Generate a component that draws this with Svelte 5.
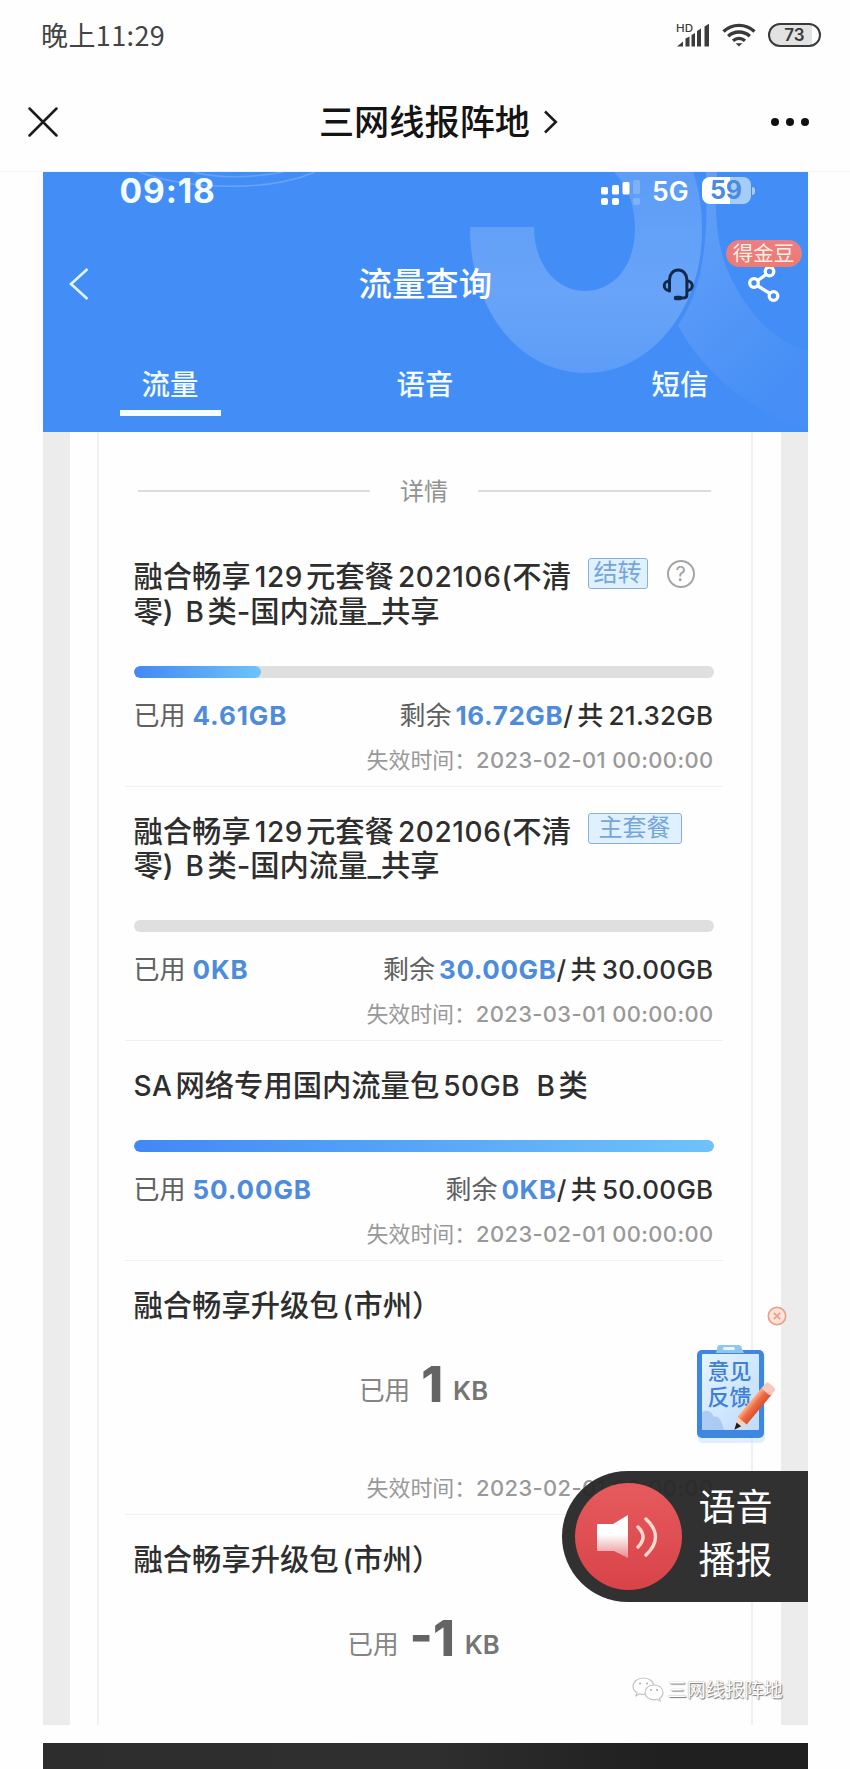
<script>
  const tabs = ["流量", "语音", "短信"];
  let active = "流量";

  const plans = [
    {
      lines: ["融合畅享129元套餐202106(不清", "零) B类-国内流量_共享"],
      tag: "结转",
      help: true,
      used: "4.61GB",
      left: "16.72GB",
      total: "21.32GB",
      percent: 22,
      expires: "2023-02-01 00:00:00"
    },
    {
      lines: ["融合畅享129元套餐202106(不清", "零) B类-国内流量_共享"],
      tag: "主套餐",
      used: "0KB",
      left: "30.00GB",
      total: "30.00GB",
      percent: 0,
      expires: "2023-03-01 00:00:00"
    },
    {
      lines: ["SA网络专用国内流量包50GB  B类"],
      used: "50.00GB",
      left: "0KB",
      total: "50.00GB",
      percent: 100,
      expires: "2023-02-01 00:00:00"
    },
    { lines: ["融合畅享升级包(市州）"], used: "1", unit: "KB", expires: "2023-02-01 00:00:00" },
    { lines: ["融合畅享升级包(市州）"], used: "-1", unit: "KB" }
  ];

  // split a title into latin and chinese runs, so the latin ones can be spaced
  function runs(text) {
    return text.match(/[A-Z0-9(][A-Z0-9( ]*|[^A-Z0-9(]+/g).map((t) => ({
      text: t,
      latin: /[A-Z0-9(]/.test(t),
      open: t.endsWith("(")
    }));
  }
</script>

<div class="phone">
  <div class="status">
    <span class="clock">晚上11:29</span>
    <svg class="signal" width="34" height="26" viewBox="0 0 34 26">
      <text x="0" y="9.5" textLength="17" lengthAdjust="spacingAndGlyphs">HD</text>
      <path d="M1 24.500l6-5v5zM9.500 24.500v-8l4-2v10zM15.500 24.500V13l3.500-2v13.500zM21 24.500V9l4-2.500v18zM28.500 24.500V4.500L33 1.800v22.700z" fill="#3c3c3c" />
    </svg>
    <svg class="wifi" width="34" height="24" viewBox="0 0 34 24" fill="none" stroke="#3a3a3a" stroke-width="3.400">
      <path d="M1.500 8.500C10 .300 24 .300 32.500 8.500" />
      <path d="M6.200 13.200c6-5.600 15.600-5.600 21.600 0" />
      <path d="M11 17.700c3.600-3 8.400-3 12 0" />
      <path d="M13.600 20.300h6.800L17 23.600z" fill="#3a3a3a" stroke="none" />
    </svg>
    <span class="battery">73</span>
  </div>

  <nav class="navbar">
    <svg class="close" width="32" height="32" viewBox="0 0 32 32" stroke="#1c1c1c" stroke-width="2.500" stroke-linecap="round">
      <path d="M2.500 2.500l27 27M29.500 2.500l-27 27" />
    </svg>
    <div class="account">
      <span>三网线报阵地</span>
      <svg width="15" height="24" viewBox="0 0 15 24" fill="none" stroke="#1c1c1c" stroke-width="2.600">
        <path d="M2 1.500L12.800 12 2 22.500" />
      </svg>
    </div>
    <svg class="more" width="40" height="10" viewBox="0 0 40 10" fill="#111">
      <circle cx="4" cy="5" r="4" /><circle cx="19" cy="5" r="4" /><circle cx="34" cy="5" r="4" />
    </svg>
  </nav>

  <main class="shot">
    <header>
      <svg class="backdrop" width="765" height="260" viewBox="0 0 765 260" fill="none">
        <defs>
          <linearGradient id="ring" x1="0" y1="0" x2="0" y2="1">
            <stop offset="0" stop-color="#fff" stop-opacity=".14" />
            <stop offset=".6" stop-color="#fff" stop-opacity=".2" />
            <stop offset="1" stop-color="#fff" stop-opacity=".14" />
          </linearGradient>
          <linearGradient id="ring2" x1="0" y1="0" x2=".5" y2="1">
            <stop offset="0" stop-color="#fff" stop-opacity=".18" />
            <stop offset="1" stop-color="#fff" stop-opacity=".02" />
          </linearGradient>
        </defs>
        <path d="M427 55h64c0 38 23 64 51 64 30 0 50-27 50-62 0-25-8-44-21-57h79c6 16 9 37 9 58 0 82-53 143-116 143-66 0-116-62-116-146z" fill="url(#ring)" />
        <path d="M663 0h11c-3 40-1 78 16 110 19 37 45 61 75 69v75c-56-12-106-54-130-101 23-33 31-75 28-153z" fill="url(#ring2)" />
        <path d="M96 0c50 18 130 20 176 0M150 0c28 7 58 6 90 0" stroke="#fff" stroke-opacity=".2" stroke-width="1.500" />
      </svg>

      <div class="ios-status">
        <b class="ios-clock">09:18</b>
        <svg class="dots" width="40" height="26" viewBox="0 0 40 26" fill="#fff">
          <rect x="1" y="7" width="7" height="7.500" rx="1.500" /><rect x="12" y="5" width="7" height="9.500" rx="1.500" />
          <rect x="22.500" y="2" width="7" height="12.500" rx="1.500" /><rect x="33" y="0" width="7" height="14" rx="1.500" opacity=".2" />
          <rect x="1" y="18" width="7" height="7" rx="2" /><rect x="12" y="18" width="7" height="7" rx="2" />
          <rect x="22.500" y="19" width="7" height="5" rx="2" fill="#3a8ffb" /><rect x="33" y="18" width="7" height="7" rx="2" opacity=".2" />
        </svg>
        <span class="net">5G</span>
        <span class="ios-battery">59</span>
        <i class="nub"></i>
      </div>

      <div class="title-bar">
        <svg class="back" width="20" height="32" viewBox="0 0 20 32" fill="none" stroke="#dff6ff" stroke-width="2.600">
          <path d="M18.500 1L2 16l16.500 15" />
        </svg>
        <h1>流量查询</h1>
        <svg class="headset" width="34" height="34" viewBox="0 0 34 34" fill="none" stroke="#12294a" stroke-width="3">
          <path d="M8.500 24V12.500a8.700 9.500 0 0 1 17.400 0V28q0 3-4 3H15" stroke-linecap="round" />
          <path d="M8.500 14c-7 0-7 9.500 0 9.500M26 14c7 0 7 9.500 0 9.500" />
          <path d="M15 31h4" stroke-width="4.500" stroke-linecap="round" />
        </svg>
        <div class="share">
          <svg width="34" height="38" viewBox="0 0 34 38" fill="none" stroke="#fff" stroke-width="3.300">
            <path d="M19 9.500l-9 6.500M10 20.500l13 8" />
            <circle cx="22.500" cy="6.500" r="4.300" /><circle cx="7" cy="18" r="4.300" /><circle cx="26.500" cy="31" r="4.300" />
          </svg>
          <span class="badge">得金豆</span>
        </div>
      </div>

      <div class="tabs">
        {#each tabs as tab}
          <button class:active={tab === active} on:click={() => (active = tab)}>{tab}</button>
        {/each}
      </div>
    </header>

    <div class="page">
      <section class="card">
        <div class="heading"><span>详情</span></div>

        {#each plans as plan}
          <article class:plain={plan.unit}>
            <div class="name">
              <h2>
                {#each plan.lines as line}
                  <div>{#each runs(line) as run}<span class:latin={run.latin} class:open={run.open}>{run.text}</span>{/each}</div>
                {/each}
              </h2>
              {#if plan.tag}<span class="tag">{plan.tag}</span>{/if}
              {#if plan.help}<span class="help">?</span>{/if}
            </div>

            {#if plan.unit}
              <p class="amount">已用<b>{plan.used}</b><em>{plan.unit}</em></p>
            {:else}
              <div class="track"><div class="fill" style="width: {plan.percent}%"></div></div>
              <div class="usage">
                <span>已用<b>{plan.used}</b></span>
                <span class="rest">剩余<b>{plan.left}</b><em>/<i>共</i>{plan.total}</em></span>
              </div>
            {/if}
            {#if plan.expires}
              <p class="expires">失效时间：<span>{plan.expires}</span></p>
            {/if}
          </article>
        {/each}
      </section>
    </div>

    <svg class="dismiss" width="20" height="20" viewBox="0 0 20 20" fill="#ffe3d9" stroke="#e9a08c" stroke-width="1.700">
      <circle cx="10" cy="10" r="8.700" /><path d="M6.800 6.800l6.400 6.400M13.200 6.800l-6.400 6.400" />
    </svg>

    <div class="feedback">
      <svg width="84" height="100" viewBox="0 0 84 100">
        <defs>
          <linearGradient id="paper" x1="0" y1="0" x2="1" y2="1">
            <stop offset="0" stop-color="#e4f4ff" /><stop offset="1" stop-color="#bfdcfb" />
          </linearGradient>
        </defs>
        <rect x="3" y="10" width="67" height="90" rx="5" fill="#bfe0ff" opacity=".5" />
        <rect x="2" y="7" width="67" height="88" rx="5" fill="#3f86e0" />
        <rect x="7" y="11" width="57" height="76" rx="1" fill="url(#paper)" />
        <path d="M7 69q8-4 12 5 6-3 10 13H7z" fill="#9dbff0" opacity=".7" />
        <path d="M25 2h18q4 0 4 4l2 4H21l1-4q0-4 3-4z" fill="#8fc6ea" />
        <rect x="28" y="4" width="12" height="3" rx="1.500" fill="#e6f6ff" />
      </svg>
      <span>意见<br />反馈</span>
      <svg class="pencil" width="84" height="100" viewBox="0 0 84 100">
        <defs>
          <linearGradient id="pen" x1="0" y1="0" x2="1" y2="0">
            <stop offset="0" stop-color="#ffb491" /><stop offset=".45" stop-color="#ee6d42" /><stop offset="1" stop-color="#d9502f" />
          </linearGradient>
        </defs>
        <g transform="translate(40 86) rotate(40)">
          <path d="M-6-12L0 0l6-12z" fill="#ffd2b4" /><path d="M-3-6L0 1l3-7z" fill="#1c1c24" />
          <rect x="-6" y="-50" width="12" height="39" fill="url(#pen)" />
          <rect x="-6" y="-57" width="12" height="9" rx="3" fill="#f6c9bd" />
        </g>
      </svg>
    </div>

    <div class="voice">
      <div class="speaker">
        <svg width="64" height="46" viewBox="0 0 64 46">
          <defs>
            <linearGradient id="horn" x1="0" y1="0" x2="0" y2="1">
              <stop offset=".45" stop-color="#fff" /><stop offset="1" stop-color="#fff" stop-opacity=".35" />
            </linearGradient>
          </defs>
          <path d="M1 11q0-1 1-1h15L32 1v43L18 37H2q-1 0-1-1z" fill="url(#horn)" />
          <path d="M42 13q10 10 0 20M50 5q19 18 0 36" fill="none" stroke="#ffd9d0" stroke-width="3.400" stroke-linecap="round" />
        </svg>
      </div>
      <span>语音<br />播报</span>
    </div>

    <div class="watermark">
      <svg width="32" height="26" viewBox="0 0 32 26" fill="#fff" stroke="#c4c4c4" stroke-width="1.200">
        <path d="M11.500 1C5.500 1 1 4.700 1 9.300c0 2.700 1.500 5 4 6.500l-1 3 3.600-1.900c1.200.4 2.500.600 3.900.600 6 0 10.500-3.700 10.500-8.200S17.500 1 11.500 1z" />
        <path d="M22 8c-5.200 0-9 3.300-9 7.400s3.800 7.400 9 7.400c1.100 0 2.200-.200 3.200-.500l3 1.700-.800-2.600c2.200-1.400 3.600-3.500 3.600-6C31 11.300 27.200 8 22 8z" />
        <g fill="#aaa" stroke="none"><circle cx="8" cy="6.500" r="1" /><circle cx="15" cy="6.500" r="1" /><circle cx="19" cy="13" r="1" /><circle cx="25" cy="13" r="1" /></g>
      </svg>
      <span>三网线报阵地</span>
    </div>
  </main>

  <div class="next-shot"></div>
</div>

<style>
:global(body) {
  background: #fefefe;
}

.phone {
  width: 850px;
  height: 1769px;
  overflow: hidden;
  display: flex;
  flex-direction: column;
  font-family: Inter, "Noto Sans CJK SC", sans-serif;
  color: #2e2e2e;
}

h1, h2, p { margin: 0; font-weight: 500; }
i, em { font-style: normal; }
svg { display: block; flex-shrink: 0; }

.status {
  height: 72px;
  box-sizing: border-box;
  padding: 0 29px 2px 41px;
  display: flex;
  align-items: center;
}
.clock {
  flex: 1;
  padding-bottom: 1px;
  font: 27px "Noto Sans CJK SC", sans-serif;
  letter-spacing: .4px;
  color: #444;
}
.signal text { font: 500 11px Inter, sans-serif; fill: #3c3c3c; }
.signal { margin-right: 12px; }
.wifi { margin-right: 12px; }
.battery {
  width: 53px;
  height: 24px;
  box-sizing: border-box;
  border: 2.500px solid #3a3a3a;
  border-radius: 12px;
  background: linear-gradient(90deg, #e2e2e2 86%, #fff 86%);
  font: 600 17px/20px Inter, sans-serif;
  text-align: center;
  color: #3a3a3a;
}

.navbar {
  height: 100px;
  box-sizing: border-box;
  padding: 0 39px 0 27px;
  border-bottom: 1px solid #f3f3f3;
  display: flex;
  align-items: center;
  justify-content: space-between;
}
.account {
  display: flex;
  align-items: center;
  gap: 13px;
  margin-left: 47px;
  font: 500 35.200px/50px "Noto Sans CJK SC", sans-serif;
  color: #141414;
}
.account span { padding-bottom: 3px; }

.shot {
  position: relative;
  width: 765px;
  height: 1553px;
  margin: 0 auto;
  overflow: hidden;
  flex-shrink: 0;
}

header {
  position: relative;
  height: 260px;
  background: #438df6;
  color: #fff;
  display: flex;
  flex-direction: column;
}
.backdrop { position: absolute; top: 0; left: 0; }
.ios-status, .title-bar, .tabs { position: relative; display: flex; align-items: center; }

.ios-status { height: 38px; padding: 0 53px 0 77px; }
.ios-clock { flex: 1; font-size: 33.500px; line-height: 38px; letter-spacing: .9px; color: #f3fdff; }
.dots { margin-right: 12px; margin-top: 3px; }
.net { font-size: 26.500px; font-weight: 600; margin-right: 13px; }
.ios-battery {
  width: 49px;
  height: 27px;
  margin-bottom: 2px;
  border-radius: 8px;
  background: linear-gradient(90deg, #fff 58%, #a6cdfa 58%);
  font-size: 25px;
  font-weight: 700;
  line-height: 27px;
  text-align: center;
  color: #4b8bdf;
}
.nub { width: 3px; height: 8px; margin-left: 1px; border-radius: 0 4px 4px 0; background: #a6cdfa; }

.title-bar { height: 148px; padding: 0 27px 0 26px; }
.title-bar h1 { flex: 1; padding-left: 270px; font-size: 33.400px; line-height: 48px; }
.headset { margin-right: 52px; }
.share { position: relative; }
.badge {
  position: absolute;
  top: -25px;
  left: -21px;
  width: 76px;
  height: 27px;
  border-radius: 14px;
  background: linear-gradient(#ea7f82, #ee7a72);
  font-size: 20.500px;
  line-height: 27px;
  text-align: center;
  color: #fff0e6;
}

.tabs { height: 74px; }
.tabs button {
  position: relative;
  flex: 1;
  height: 74px;
  padding: 0 0 25px;
  border: 0;
  background: none;
  font: 500 28.400px "Noto Sans CJK SC", sans-serif;
  color: #f2fcff;
}
.tabs .active::after {
  content: "";
  position: absolute;
  left: 77px;
  bottom: 16px;
  width: 101px;
  height: 6px;
  background: #f4feff;
}

.page {
  height: 1293px;
  box-sizing: border-box;
  padding: 0 28px 0 27px;
  border: solid #ececec;
  border-width: 0 27px;
}
.card {
  height: 100%;
  box-sizing: border-box;
  padding: 0 37px 0 35px;
  border: solid #f1f1f1;
  border-width: 0 2px;
}
.heading {
  height: 100px;
  box-sizing: border-box;
  padding: 18px 3px 0 4px;
  display: flex;
  align-items: center;
  gap: 30px;
  font-size: 24px;
  color: #929292;
}
.heading span { margin-top: -3px; }
.heading::before, .heading::after { content: ""; flex: 1; height: 1.500px; background: #dcdcdc; }

article {
  height: 254.500px;
  box-sizing: border-box;
  padding-top: 28px;
  position: relative;
}
article:nth-of-type(3) { height: 220px; }
article.plain { height: 253.500px; }
article:not(:last-child)::after {
  content: "";
  position: absolute;
  left: -9px;
  right: -9px;
  bottom: 0;
  height: 1px;
  background: #f1f1f1;
}

.name { display: flex; align-items: flex-start; }
.name h2 {
  width: 454px;
  flex-shrink: 0;
  font-size: 29.300px;
  line-height: 34.500px;
  white-space: pre;
}
.latin { font-size: 28px; letter-spacing: .6px; padding: 0 3px 0 4px; }
.latin:first-child { padding-left: 0; }
.latin.open { padding-right: 0; }
.tag {
  height: 31px;
  margin-top: -2px;
  box-sizing: border-box;
  padding: 0 5px;
  border: 1.500px solid #8ab0d8;
  border-radius: 3px;
  background: #dff0fe;
  font-size: 24px;
  line-height: 28px;
  color: #75a6d8;
}
article:nth-of-type(2) .tag { padding: 0 10px; }
.help {
  width: 28px;
  height: 28px;
  margin: 0 0 0 19px;
  box-sizing: border-box;
  border: 2px solid #a5a5a5;
  border-radius: 50%;
  font-size: 20px;
  line-height: 24px;
  text-align: center;
  color: #a0a0a0;
}

.track { height: 12px; margin-top: 36.500px; border-radius: 6px; background: #dfdfdf; overflow: hidden; }
.fill { height: 100%; border-radius: 6px; background: linear-gradient(90deg, #4288f5, #6ec3fa); }

.usage {
  margin-top: 21px;
  height: 34px;
  display: flex;
  justify-content: space-between;
  font-size: 26px;
  line-height: 34px;
  white-space: nowrap;
  color: #606060;
}
.usage b { margin-left: 7px; letter-spacing: .9px; color: #4d8cdb; }
.usage .rest b { margin-left: 4px; letter-spacing: .6px; }
.rest em { font-weight: 500; letter-spacing: .3px; color: #2e2e2e; }
.rest i { margin: 0 5px 0 4px; }

.expires {
  margin-top: 12px;
  line-height: 30px;
  text-align: right;
  font-size: 21.900px;
  font-weight: 400;
  color: #999;
}
.expires span { letter-spacing: .4px; font-weight: 500; }

.amount {
  height: 149px;
  box-sizing: border-box;
  padding-top: 29.500px;
  text-align: center;
  font-size: 25.700px;
  line-height: 58px;
  font-weight: 400;
  color: #858585;
}
.amount b {
  position: relative;
  top: 2px;
  margin: 0 10px 0 11px;
  font-size: 49.500px;
  font-weight: 800;
  color: #646464;
}
.amount em { font-weight: 600; color: #757575; }
.plain .expires { margin-top: 0; }

.dismiss { position: absolute; left: 724px; top: 1134px; }
.feedback { position: absolute; left: 652px; top: 1171px; }
.feedback span {
  position: absolute;
  left: 13px;
  top: 14px;
  font: 500 22px/25.500px "Noto Sans CJK SC", sans-serif;
  color: #3f80d4;
}
.pencil { position: absolute; top: 0; left: 0; }

.voice {
  position: absolute;
  right: 0;
  top: 1299px;
  width: 246px;
  height: 131px;
  box-sizing: border-box;
  padding-left: 13px;
  border-radius: 66px 0 0 66px;
  background: rgba(38, 38, 38, .95);
  display: flex;
  align-items: center;
  gap: 17px;
  font-size: 37px;
  line-height: 53px;
  color: #fff;
}
.voice span { padding-bottom: 5px; }
.speaker {
  width: 107px;
  height: 107px;
  border-radius: 50%;
  background: linear-gradient(#e65a5e, #d84348);
  display: flex;
  align-items: center;
  justify-content: center;
}

.watermark {
  position: absolute;
  left: 589px;
  top: 1504px;
  display: flex;
  align-items: center;
  gap: 4px;
  font-size: 19.200px;
  line-height: 28px;
  color: #fff;
  text-shadow: 1px 1px 1px #777, 0 0 1px #888;
}

.next-shot {
  width: 765px;
  flex: 1;
  margin: 18px auto 0;
  background: linear-gradient(90deg, #2d2d2d, #2f2f2f 50%, #202020 80%);
}
</style>
